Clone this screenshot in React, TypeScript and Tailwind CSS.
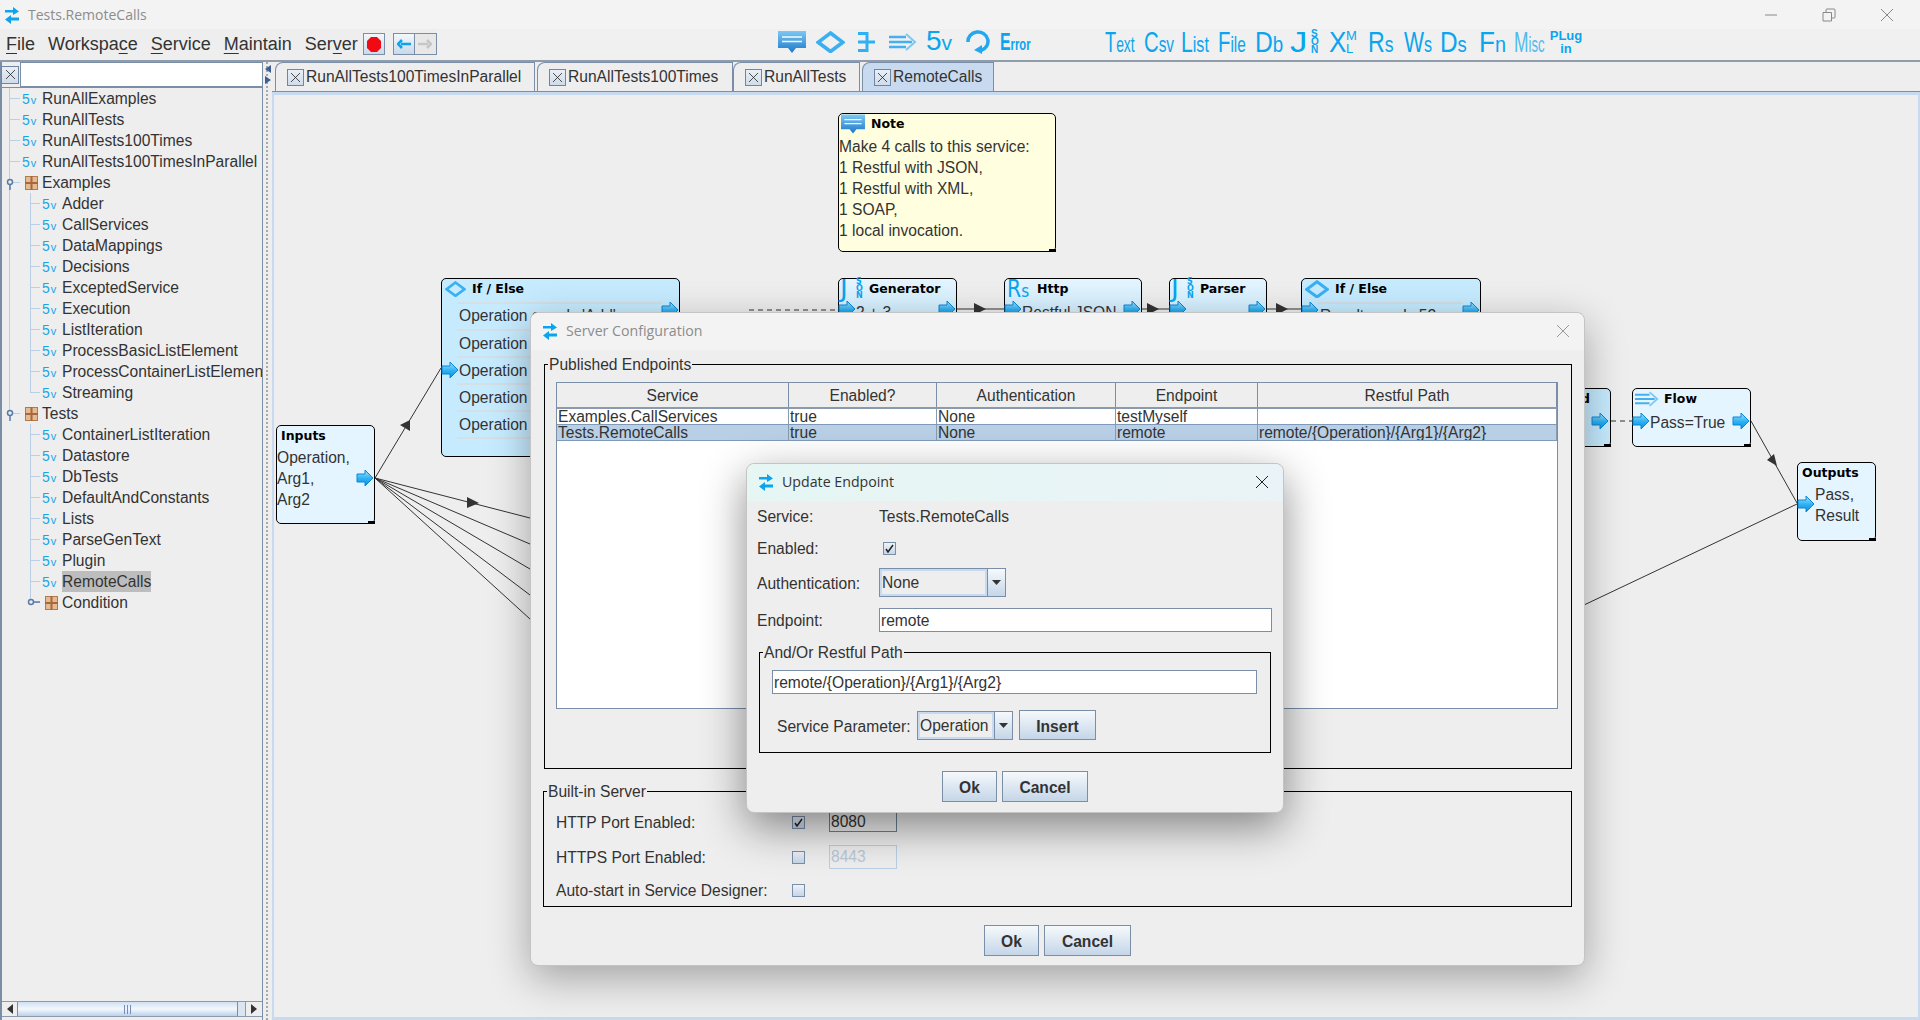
import * as React from "react"

const SwapIcon = () => (
  <svg width="14" height="18" viewBox="0 0 14 18" className="shrink-0">
    <path d="M0 4h8V1l6 4.500L8 9V6.500H0z" fill="#0aa5ee" />
    <path d="M14 11.500H6V9l-6 4.500 6 4.500v-3.500h8z" fill="#0aa5ee" />
  </svg>
)

const CloseX = ({ color = "#333" }: { color?: string }) => (
  <svg width="14" height="14" viewBox="0 0 14 14" className="shrink-0">
    <path d="M1 1l12 12M13 1L1 13" stroke={color} strokeWidth="1" fill="none" />
  </svg>
)

const Port = ({ className }: { className: string }) => (
  <svg width="18" height="18" viewBox="0 0 18 18" className={`absolute ${className}`}>
    <defs>
      <linearGradient id="portFill" x1="0" y1="0" x2="0" y2="1">
        <stop offset="0" stopColor="#a4e2fd" />
        <stop offset="0.55" stopColor="#2bb0f2" />
        <stop offset="1" stopColor="#0b8fe0" />
      </linearGradient>
    </defs>
    <polygon points="1,5 9,5 9,1 17,9 9,17 9,13 1,13" fill="url(#portFill)" stroke="#0a86d8" strokeWidth="1" />
  </svg>
)

const NoteIcon = ({ className = "" }: { className?: string }) => (
  <svg width="28" height="22" viewBox="0 0 28 22" className={className}>
    <defs>
      <linearGradient id="noteFill" x1="0" y1="0" x2="0" y2="1">
        <stop offset="0" stopColor="#7cc8f5" />
        <stop offset="1" stopColor="#1d78c8" />
      </linearGradient>
    </defs>
    <path d="M0 0h28v17h-10l-4 5-4-5H0z" fill="url(#noteFill)" />
    <path d="M4 6h20M4 10.500h20" stroke="#f2fbff" strokeWidth="1.500" />
  </svg>
)

const DiamondIcon = ({ size = 28 }: { size?: number }) => (
  <svg width={size} height={size * 0.78} viewBox="0 0 28 22">
    <polygon points="14,2 26,11 14,20 2,11" fill="none" stroke="#3ab0f2" strokeWidth="3.500" />
  </svg>
)

const JoinIcon = () => (
  <svg width="18" height="20" viewBox="0 0 18 20">
    <path d="M1 1.500h10M1 10h17M1 18.500h10M10 0v20" stroke="#2eb0f5" strokeWidth="3" fill="none" />
  </svg>
)

const FlowIcon = ({ className = "" }: { className?: string }) => (
  <svg width="28" height="20" viewBox="0 0 28 20" className={className}>
    <path d="M0 5h17M0 10h23M0 15h17" stroke="#46b0ee" strokeWidth="2.500" fill="none" />
    <path d="M17 2l9 8-9 8" stroke="#7cc8f5" strokeWidth="2" fill="none" />
  </svg>
)

const LoopIcon = () => (
  <svg width="30" height="24" viewBox="0 0 30 24">
    <path d="M5 12A10 9.500 0 1 1 18 20.500" stroke="#22a8ee" strokeWidth="3.500" fill="none" />
    <polygon points="19,15 19,24 11,20" fill="#22a8ee" />
  </svg>
)

const PackageIcon = () => (
  <svg width="13" height="14" viewBox="0 0 13 14" className="shrink-0">
    <rect x="0.500" y="0.500" width="12" height="13" fill="#e6bb90" stroke="#b27a50" />
    <path d="M0 7h13M6.500 0v14" stroke="#a8683e" strokeWidth="2" />
  </svg>
)

const ExpandHandle = ({ open, className }: { open: boolean; className: string }) => (
  <svg width="14" height="14" viewBox="0 0 14 14" className={`absolute ${className}`}>
    <circle cx="4" cy="5" r="2.500" fill="#eeeeee" stroke="#5b7ca8" strokeWidth="1.500" />
    {open ? (
      <path d="M4 8v5" stroke="#5b7ca8" strokeWidth="1.500" />
    ) : (
      <path d="M7 5h6" stroke="#5b7ca8" strokeWidth="1.500" />
    )}
  </svg>
)

const SvGlyph = () => (
  <span className="flex w-[20px] shrink-0 items-baseline text-[#18a5e8] leading-none">
    <span className="text-[14px]">5</span>
    <span className="ml-[1px] text-[11px]">v</span>
  </span>
)

const tree = [
  { name: "RunAllExamples", root: true },
  { name: "RunAllTests", root: true },
  { name: "RunAllTests100Times", root: true },
  { name: "RunAllTests100TimesInParallel", root: true },
  { name: "Examples", root: true, folder: true },
  { name: "Adder" },
  { name: "CallServices" },
  { name: "DataMappings" },
  { name: "Decisions" },
  { name: "ExceptedService" },
  { name: "Execution" },
  { name: "ListIteration" },
  { name: "ProcessBasicListElement" },
  { name: "ProcessContainerListElement" },
  { name: "Streaming", lastChild: true },
  { name: "Tests", root: true, folder: true, lastRoot: true },
  { name: "ContainerListIteration", noRootLine: true },
  { name: "Datastore", noRootLine: true },
  { name: "DbTests", noRootLine: true },
  { name: "DefaultAndConstants", noRootLine: true },
  { name: "Lists", noRootLine: true },
  { name: "ParseGenText", noRootLine: true },
  { name: "Plugin", noRootLine: true },
  { name: "RemoteCalls", noRootLine: true, selected: true },
  { name: "Condition", noRootLine: true, folder: true, lastChild: true },
]

type TreeItem = {
  name: string
  root?: boolean
  folder?: boolean
  lastChild?: boolean
  lastRoot?: boolean
  noRootLine?: boolean
  selected?: boolean
}

function TreeRow({ item }: { item: TreeItem }) {
  const { name, root, folder, lastChild, lastRoot, noRootLine, selected } = item
  return (
    <div className="relative flex h-[21px] items-center whitespace-nowrap">
      {!noRootLine && (
        <div className={`absolute left-[7px] top-0 w-px bg-[#b9cfe8] ${lastRoot ? "h-[10px]" : "h-full"}`} />
      )}
      {!root && (
        <>
          <div className={`absolute left-[28px] top-0 w-px bg-[#b9cfe8] ${lastChild ? "h-[11px]" : "h-full"}`} />
          <div className="absolute left-[28px] top-[10px] h-px w-[10px] bg-[#b9cfe8]" />
        </>
      )}
      {root && <div className="absolute left-[7px] top-[10px] h-px w-[11px] bg-[#b9cfe8]" />}
      {folder && root && <ExpandHandle open className="left-[4px] top-[5px]" />}
      {folder && !root && <ExpandHandle open={false} className="left-[25px] top-[5px]" />}
      <div className={root ? (folder ? "ml-[23px] flex items-center" : "ml-[20px] flex items-center") : folder ? "ml-[43px] flex items-center" : "ml-[40px] flex items-center"}>
        {folder ? (
          <span className="w-[17px] shrink-0"><PackageIcon /></span>
        ) : (
          <SvGlyph />
        )}
        <span className={`text-[15.6px] leading-[21px] ${selected ? "bg-[#bdbdbd]" : ""}`}>{name}</span>
      </div>
    </div>
  )
}

function Scrollbar() {
  return (
    <div className="flex h-[16px] shrink-0 border-y border-[#8a9bb0]">
      <div className="flex w-[15px] items-center justify-center bg-[#eeeeee]">
        <svg width="6" height="10" viewBox="0 0 6 10"><polygon points="6,0 6,10 0,5" fill="#333" /></svg>
      </div>
      <div className="flex w-[221px] items-center justify-center border-x border-[#6f8fc0] bg-gradient-to-b from-[#cfe0f2] via-[#f4f8fc] to-[#bcd0e8]">
        <div className="h-[9px] w-[1px] bg-[#6f8fc0]" />
        <div className="ml-[2px] h-[9px] w-[1px] bg-[#6f8fc0]" />
        <div className="ml-[2px] h-[9px] w-[1px] bg-[#6f8fc0]" />
      </div>
      <div className="w-[7px] bg-[#dbe5f0]" />
      <div className="flex w-[17px] items-center justify-center border-l border-[#8a9bb0] bg-[#eeeeee]">
        <svg width="6" height="10" viewBox="0 0 6 10"><polygon points="0,0 0,10 6,5" fill="#333" /></svg>
      </div>
    </div>
  )
}

function TabCloseBtn() {
  return (
    <span className="mr-[2px] flex h-[17px] w-[17px] shrink-0 items-center justify-center border border-[#6f86a0] bg-gradient-to-b from-[#e9eff6] to-[#cfdcea]">
      <svg width="9" height="9" viewBox="0 0 9 9"><path d="M0 0l9 9M9 0L0 9" stroke="#222" strokeWidth="0.800" /></svg>
    </span>
  )
}

function Tab({ label, className, active }: { label: string; className: string; active?: boolean }) {
  return (
    <div className={`flex h-[29px] items-center rounded-tl-[8px] border-l border-r border-t border-[#7a8ea8] pl-[11px] text-[15.6px] whitespace-nowrap ${active ? "bg-[#c8daf0]" : "bg-[#eeeeee]"} ${className}`}>
      <TabCloseBtn />
      {label}
    </div>
  )
}

const toolWords = [
  { big: "T", small: "ext", box: "ml-[74px] w-[30px]", fit: "scale-x-[.63]" },
  { big: "C", small: "sv", box: "ml-[9px] w-[30px]", fit: "scale-x-[.7]" },
  { big: "L", small: "ist", box: "ml-[7px] w-[28px]", fit: "scale-x-[.73]" },
  { big: "F", small: "ile", box: "ml-[9px] w-[28px]", fit: "scale-x-[.7]" },
  { big: "D", small: "b", box: "ml-[9px] w-[28px]", fit: "scale-x-[.85]" },
]

const toolWords2 = [
  { big: "R", small: "s", box: "ml-[9px] w-[26px]", fit: "scale-x-[.8]" },
  { big: "W", small: "s", box: "ml-[10px] w-[28px]", fit: "scale-x-[.73]" },
  { big: "D", small: "s", box: "ml-[8px] w-[27px]", fit: "scale-x-[.84]" },
  { big: "F", small: "n", box: "ml-[12px] w-[27px]", fit: "scale-x-[.9]" },
  { big: "M", small: "isc", box: "ml-[8px] w-[30px] opacity-70", fit: "scale-x-[.6]" },
]

const ToolWord = ({ big, small, box, fit }: { big: string; small: string; box: string; fit: string }) => (
  <div className={`h-[30px] shrink-0 leading-[30px] whitespace-nowrap text-[#0aa5ee] ${box}`}>
    <span className={`inline-block origin-left ${fit}`}>
      <span className="text-[29px]">{big}</span>
      <span className="text-[22px]">{small}</span>
    </span>
  </div>
)

const JsonGlyph = () => (
  <div className="flex h-[30px] w-[31px] shrink-0 text-[#0aa5ee]">
    <span className="inline-block w-[21px] origin-left scale-x-[1.2] text-[29px] leading-[30px]">J</span>
    <span className="mt-[3px] flex w-[10px] flex-col text-[10px] leading-[8px] font-bold">
      <span>S</span>
      <span>O</span>
      <span>N</span>
    </span>
  </div>
)

const SmallJsonGlyph = () => (
  <div className="mr-[5px] flex h-[22px] w-[24px] shrink-0 text-[#0aa5ee]">
    <span className="inline-block w-[16px] origin-left scale-x-[1.1] text-[24px] font-normal leading-[22px]">J</span>
    <span className="flex w-[8px] flex-col text-[8px] leading-[7px] font-bold">
      <span>S</span>
      <span>O</span>
      <span>N</span>
    </span>
  </div>
)

function Toolbar() {
  return (
    <div className="flex h-[31px] items-center bg-[#f0f0f0]">
      <div className="flex h-full w-[437px] shrink-0 items-center bg-[#eeeeee] pb-[1px] text-[18px]">
        <span className="ml-[6px]"><span className="underline underline-offset-[3px]">F</span>ile</span>
        <span className="ml-[13px]">Workspa<span className="underline underline-offset-[3px]">c</span>e</span>
        <span className="ml-[13px]"><span className="underline underline-offset-[3px]">S</span>ervice</span>
        <span className="ml-[13px]"><span className="underline underline-offset-[3px]">M</span>aintain</span>
        <span className="ml-[13px]">Ser<span className="underline underline-offset-[3px]">v</span>er</span>
        <span className="ml-[5px] flex h-[22px] w-[22px] items-center justify-center border border-[#7a8ea8] bg-gradient-to-b from-[#f4f7fb] to-[#c9d9ea]">
          <svg width="14" height="15" viewBox="0 0 14 15"><polygon points="4,0 10,0 14,4 14,11 10,15 4,15 0,11 0,4" fill="#f00a14" /></svg>
        </span>
        <span className="ml-[8px] flex h-[22px] w-[22px] items-center justify-center border border-[#7a8ea8] bg-gradient-to-b from-[#f4f7fb] to-[#c9d9ea]">
          <svg width="14" height="10" viewBox="0 0 14 10"><path d="M14 5H4M5 1L1 5l4 4" stroke="#0aa5ee" strokeWidth="2.500" fill="none" /></svg>
        </span>
        <span className="flex h-[22px] w-[22px] items-center justify-center border border-l-0 border-[#7a8ea8] bg-[#e8e8e8]">
          <svg width="14" height="10" viewBox="0 0 14 10"><path d="M0 5h10M9 1l4 4-4 4" stroke="#c6c6c6" strokeWidth="2.500" fill="none" /></svg>
        </span>
      </div>
      <div className="flex h-full items-center pb-[5px]">
        <NoteIcon className="ml-[341px] shrink-0" />
        <div className="ml-[10px] shrink-0"><DiamondIcon size={29} /></div>
        <div className="ml-[12px] shrink-0"><JoinIcon /></div>
        <FlowIcon className="ml-[14px] shrink-0" />
        <div className="ml-[9px] flex w-[28px] shrink-0 items-baseline leading-[30px] text-[#0aa5ee]">
          <span className="text-[28px]">5</span>
          <span className="text-[21px]">v</span>
        </div>
        <div className="ml-[9px] shrink-0"><LoopIcon /></div>
        <div className="ml-[7px] h-[30px] w-[31px] shrink-0 leading-[30px] font-bold whitespace-nowrap text-[#0aa5ee]">
          <span className="inline-block origin-left scale-x-[.66]">
            <span className="text-[24px]">E</span>
            <span className="text-[17px]">rror</span>
          </span>
        </div>
        {toolWords.map((w) => (
          <ToolWord key={w.big + w.small} {...w} />
        ))}
        <div className="ml-[7px]"><JsonGlyph /></div>
        <div className="ml-[8px] flex h-[30px] w-[30px] shrink-0 text-[#0aa5ee]">
          <span className="inline-block w-[17px] origin-left scale-x-[.9] text-[29px] leading-[30px]">X</span>
          <span className="mt-[2px] flex flex-col text-[13px] leading-[13px]">
            <span>M</span>
            <span>L</span>
          </span>
        </div>
        {toolWords2.map((w) => (
          <ToolWord key={w.big + w.small} {...w} />
        ))}
        <div className="ml-[7px] flex h-[26px] w-[30px] shrink-0 flex-col items-center text-[13px] leading-[13px] font-bold text-[#0aa5ee]">
          <span>PLug</span>
          <span>in</span>
        </div>
      </div>
    </div>
  )
}

function FlowNode({
  className,
  title,
  icon,
  titleClass = "",
  children,
}: {
  className: string
  title: string
  icon?: React.ReactNode
  titleClass?: string
  children?: React.ReactNode
}) {
  return (
    <div className={`absolute rounded-[5px] border-[1.5px] border-black ${className}`}>
      <div className={`flex h-[22px] items-center pb-[2px] font-['DejaVu_Sans',sans-serif] text-[12.5px] font-bold text-black ${titleClass}`}>
        {icon}
        {title}
      </div>
      {children}
      <div className="absolute -bottom-[1px] -right-[1px] h-[3px] w-[7px] bg-black" />
    </div>
  )
}

function Canvas() {
  return (
    <div className="relative flex-1 overflow-hidden border-x-2 border-b-[3px] border-[#c8daf0] bg-[#eeeeee]">
      <svg width="1646" height="925" className="absolute left-0 top-0">
        <g stroke="#333" strokeWidth="1" fill="none">
          <path d="M101 383L167 273" />
          <path d="M101 383L256 423M101 383L256 449M101 383L256 474M101 383L256 500M101 383L256 524" />
          <path d="M1310 510L1523 409M1477 326L1523 408" />
          <path d="M683 214H730M868 214H895M993 214H1027" />
          <path d="M475 215H564" strokeDasharray="5 4" />
          <path d="M1337 326H1358" strokeDasharray="5 4" />
        </g>
        <g fill="#333">
          <polygon points="136,325 126,330 136,336" />
          <polygon points="193,402 205,408 193,413" />
          <polygon points="1500,359 1493,365 1503,371" />
          <polygon points="700,208 712,214 700,220" />
          <polygon points="873,208 885,214 873,220" />
          <polygon points="1002,208 1014,214 1002,220" />
        </g>
      </svg>

      <FlowNode className="left-[564px] top-[18px] h-[139px] w-[218px] bg-[#ffffe0]" title="Note" titleClass="pl-[2px]" icon={<NoteIcon className="mr-[6px] h-[20px] w-[24px]" />}>
        <div className="pl-0 text-[15.6px] leading-[21px]">
          <div>Make 4 calls to this service:</div>
          <div>1 Restful with JSON,</div>
          <div>1 Restful with XML,</div>
          <div>1 SOAP,</div>
          <div>1 local invocation.</div>
        </div>
      </FlowNode>

      <FlowNode className="left-[167px] top-[183px] h-[179px] w-[239px] bg-[#c6ebff]" title="If / Else" titleClass="pl-[3px]" icon={<span className="mr-[6px] flex w-[21px]"><DiamondIcon size={21} /></span>}>
        <div className="ml-[15px] mt-[1px] w-[205px] border-t-2 border-[#d4dfe6] text-[15.6px]">
          <div className="h-[27px] border-b-2 border-[#d4dfe6] pl-[2px] leading-[24px] whitespace-nowrap">Operation equals 'Add'</div>
          <div className="h-[27px] border-b-2 border-[#d4dfe6] pl-[2px] leading-[25px]">Operation</div>
          <div className="h-[27px] border-b-2 border-[#d4dfe6] pl-[2px] leading-[25px]">Operation</div>
          <div className="h-[27px] border-b-2 border-[#d4dfe6] pl-[2px] leading-[25px]">Operation</div>
          <div className="h-[27px] border-b-2 border-[#d4dfe6] pl-[2px] leading-[25px]">Operation</div>
        </div>
        <Port className="-left-[1px] top-[82px]" />
        <Port className="right-0 top-[22px]" />
      </FlowNode>

      <FlowNode className="left-[564px] top-[183px] h-[60px] w-[119px] bg-gradient-to-b from-[#e4f5ff] to-[#c6ebff]" title="Generator" titleClass="pl-[1px]" icon={<SmallJsonGlyph />}>
        <Port className="-left-[1px] top-[21px]" />
        <Port className="right-0 top-[21px]" />
        <div className="ml-[17px] mt-[1px] text-[15.6px] leading-[21px]">2 + 3</div>
      </FlowNode>

      <FlowNode className="left-[730px] top-[183px] h-[60px] w-[138px] bg-gradient-to-b from-[#e4f5ff] to-[#c6ebff]" title="Http" titleClass="pl-[2px]" icon={<span className="mr-[6px] h-[22px] w-[24px]"><span className="inline-block origin-left scale-x-[.85] text-[24px] font-normal leading-[22px] text-[#0aa5ee]">R<span className="text-[18px]">s</span></span></span>}>
        <Port className="-left-[1px] top-[21px]" />
        <Port className="right-0 top-[21px]" />
        <div className="ml-[17px] mt-[1px] text-[15.6px] leading-[21px]">Restful JSON</div>
      </FlowNode>

      <FlowNode className="left-[895px] top-[183px] h-[60px] w-[98px] bg-gradient-to-b from-[#e4f5ff] to-[#c6ebff]" title="Parser" titleClass="pl-[1px]" icon={<SmallJsonGlyph />}>
        <Port className="-left-[1px] top-[21px]" />
        <Port className="right-0 top-[21px]" />
      </FlowNode>

      <FlowNode className="left-[1027px] top-[183px] h-[60px] w-[180px] bg-[#c6ebff]" title="If / Else" titleClass="pl-[3px]" icon={<span className="mr-[6px] flex w-[24px]"><DiamondIcon size={24} /></span>}>
        <div className="ml-[16px] mt-[1px] h-[27px] w-[145px] border-t-2 border-[#d4dfe6] pl-[2px] text-[15.6px] leading-[24px] whitespace-nowrap">Result equals 52</div>
        <Port className="-left-[1px] top-[22px]" />
        <Port className="right-0 top-[22px]" />
      </FlowNode>

      <FlowNode className="left-[1226px] top-[293px] h-[59px] w-[111px] bg-[#c6ebff]" title="End" titleClass="justify-end pr-[20px]">
        <Port className="right-[1px] top-[23px]" />
      </FlowNode>

      <FlowNode className="left-[1358px] top-[293px] h-[59px] w-[119px] bg-[#e4f5ff]" title="Flow" titleClass="pl-[2px]" icon={<FlowIcon className="mr-[5px] h-[20px] w-[24px]" />}>
        <Port className="-left-[1px] top-[23px]" />
        <Port className="right-0 top-[23px]" />
        <div className="ml-[17px] mt-[1px] text-[15.6px] leading-[21px]">Pass=True</div>
      </FlowNode>

      <FlowNode className="left-[1523px] top-[367px] h-[79px] w-[79px] bg-[#e4f5ff]" title="Outputs" titleClass="pl-[4px]">
        <Port className="-left-[1px] top-[32px]" />
        <div className="-mt-[1px] ml-[17px] text-[15.6px] leading-[21px]">
          <div>Pass,</div>
          <div>Result</div>
        </div>
      </FlowNode>

      <FlowNode className="left-[2px] top-[330px] h-[99px] w-[99px] bg-[#e4f5ff]" title="Inputs" titleClass="pl-[4px]">
        <Port className="right-0 top-[43px]" />
        <div className="-mt-[1px] text-[15.6px] leading-[21px]">
          <div>Operation,</div>
          <div>Arg1,</div>
          <div>Arg2</div>
        </div>
      </FlowNode>
    </div>
  )
}

const MetalButton = ({ label, className }: { label: string; className: string }) => (
  <div className={`flex items-center justify-center border border-[#7a8ea8] bg-gradient-to-b from-[#f6f9fc] to-[#c5d6e8] pt-[2px] text-[15.6px] font-bold ${className}`}>
    {label}
  </div>
)

const CheckBox = ({ checked, className = "" }: { checked?: boolean; className?: string }) => (
  <span className={`flex h-[13px] w-[13px] shrink-0 items-center justify-center border border-[#7a8ea8] bg-gradient-to-b from-[#eef3f8] to-[#c5d6e8] ${className}`}>
    {checked && (
      <svg width="9" height="9" viewBox="0 0 9 9"><path d="M1 5l2 3 5-7" stroke="#222" strokeWidth="1.500" fill="none" /></svg>
    )}
  </span>
)

const ComboBox = ({ value, className, textW }: { value: string; className: string; textW: string }) => (
  <div className={`flex h-[29px] shrink-0 border border-[#7a8ea8] bg-[#eeeeee] ${className}`}>
    <div className={`flex items-center border-2 border-[#c8daf0] pt-[1px] text-[15.6px] ${textW}`}>{value}</div>
    <div className="flex flex-1 items-center justify-center border-l border-[#7a8ea8] bg-gradient-to-b from-[#f6f9fc] to-[#c5d6e8]">
      <svg width="9" height="5" viewBox="0 0 9 5"><polygon points="0,0 9,0 4.500,5" fill="#333" /></svg>
    </div>
  </div>
)

const TextField = ({ value, className }: { value: string; className: string }) => (
  <div className={`flex h-[24px] items-center border border-[#7a8ea8] bg-white pl-[1px] pt-[1px] text-[15.6px] ${className}`}>{value}</div>
)

const GroupBox = ({ label, className, children }: { label: string; className: string; children: React.ReactNode }) => (
  <div className={`relative border border-black ${className}`}>
    <span className="absolute -top-[9px] left-[3px] bg-[#eeeeee] px-[1px] text-[15.6px] leading-[18px] whitespace-nowrap">{label}</span>
    {children}
  </div>
)

function EndpointTable() {
  const cell = "overflow-hidden whitespace-nowrap pl-[1px] border-r border-[#8a9bb0] leading-[15px]"
  const head = "flex h-[24px] items-center justify-center border-r border-[#7a8ea8] pt-[2px]"
  return (
    <div className="ml-[11px] mt-[17px] h-[327px] w-[1002px] border border-[#7a8ea8] bg-white text-[15.6px]">
      <div className="grid grid-cols-[232px_148px_179px_142px_299px] border-b-2 border-[#8a9bb0] bg-[#eeeeee]">
        <div className={head}>Service</div>
        <div className={head}>Enabled?</div>
        <div className={head}>Authentication</div>
        <div className={head}>Endpoint</div>
        <div className={head}>Restful Path</div>
      </div>
      <div className="grid h-[15px] grid-cols-[232px_148px_179px_142px_299px]">
        <div className={cell}>Examples.CallServices</div>
        <div className={cell}>true</div>
        <div className={cell}>None</div>
        <div className={cell}>testMyself</div>
        <div className={cell}></div>
      </div>
      <div className="grid h-[17px] grid-cols-[232px_148px_179px_142px_299px] border-y border-[#7f9ab8] bg-[#b8cfe5]">
        <div className={cell}>Tests.RemoteCalls</div>
        <div className={cell}>true</div>
        <div className={cell}>None</div>
        <div className={cell}>remote</div>
        <div className={cell}>remote/{"{Operation}"}/{"{Arg1}"}/{"{Arg2}"}</div>
      </div>
    </div>
  )
}

function ServerConfigDialog() {
  return (
    <div className="absolute left-[530px] top-[312px] flex h-[654px] w-[1055px] flex-col rounded-[8px] border border-[#c4c4c4] bg-[#eeeeee] shadow-[0_12px_40px_rgba(0,0,0,0.32)]">
      <div className="flex h-[37px] shrink-0 items-center rounded-t-[8px] bg-[#f3f3f3] pb-[2px] pl-[12px] pr-[14px] text-[#8c8c8c]">
        <SwapIcon />
        <span className="ml-[9px] font-['Open_Sans',sans-serif] text-[14.2px]">Server Configuration</span>
        <span className="ml-auto"><CloseX color="#999" /></span>
      </div>
      <GroupBox label="Published Endpoints" className="ml-[13px] mt-[14px] h-[405px] w-[1028px]">
        <EndpointTable />
      </GroupBox>
      <GroupBox label="Built-in Server" className="ml-[12px] mt-[22px] h-[116px] w-[1029px]">
        <div className="mt-[20px] flex h-[20px] items-center pl-[12px] text-[15.6px]">
          <span className="mt-[2px] w-[236px]">HTTP Port Enabled:</span>
          <CheckBox checked />
          <span className="ml-[24px] flex h-[20px] w-[68px] items-center border-x border-b border-[#6a7f96] pl-[1px]">8080</span>
        </div>
        <div className="mt-[13px] flex h-[24px] items-center pl-[12px] text-[15.6px]">
          <span className="mt-[2px] w-[236px]">HTTPS Port Enabled:</span>
          <CheckBox />
          <span className="ml-[24px] flex h-[24px] w-[68px] items-center border border-[#b8cfe5] pl-[1px] text-[#b8c8d8]">8443</span>
        </div>
        <div className="mt-[11px] flex h-[20px] items-center pl-[12px] text-[15.6px]">
          <span className="mt-[2px] w-[236px]">Auto-start in Service Designer:</span>
          <CheckBox />
        </div>
      </GroupBox>
      <div className="mt-[18px] flex justify-center gap-[5px]">
        <MetalButton label="Ok" className="h-[31px] w-[55px]" />
        <MetalButton label="Cancel" className="h-[31px] w-[87px]" />
      </div>
    </div>
  )
}

function UpdateEndpointDialog() {
  return (
    <div className="absolute left-[746px] top-[463px] flex h-[350px] w-[538px] flex-col rounded-[8px] border border-[#c4c4c4] bg-[#eeeeee] shadow-[0_14px_44px_rgba(0,0,0,0.45)]">
      <div className="flex h-[37px] shrink-0 items-center rounded-t-[8px] bg-gradient-to-r from-[#e5f6f3] to-[#eaf3f7] pb-[1px] pl-[12px] pr-[14px]">
        <SwapIcon />
        <span className="ml-[9px] font-['Open_Sans',sans-serif] text-[14.2px]">Update Endpoint</span>
        <span className="ml-auto"><CloseX color="#222" /></span>
      </div>
      <div className="mt-[4px] flex h-[24px] items-center pl-[10px] text-[15.6px]">
        <span className="w-[122px]">Service:</span>
        <span>Tests.RemoteCalls</span>
      </div>
      <div className="mt-[7px] flex h-[24px] items-center pl-[10px] text-[15.6px]">
        <span className="mt-[2px] w-[126px]">Enabled:</span>
        <CheckBox checked />
      </div>
      <div className="mt-[8px] flex items-center pl-[10px] text-[15.6px]">
        <span className="mt-[2px] w-[122px]">Authentication:</span>
        <ComboBox value="None" className="w-[127px]" textW="w-[107px]" />
      </div>
      <div className="mt-[10px] flex items-center pl-[10px] text-[15.6px]">
        <span className="mt-[2px] w-[122px]">Endpoint:</span>
        <TextField value="remote" className="w-[393px]" />
      </div>
      <GroupBox label="And/Or Restful Path" className="ml-[12px] mt-[20px] h-[101px] w-[512px]">
        <TextField value="remote/{Operation}/{Arg1}/{Arg2}" className="ml-[12px] mt-[17px] w-[485px]" />
        <div className="mt-[16px] flex items-center pl-[17px] text-[15.6px]">
          <span className="mt-[2px] w-[140px]">Service Parameter:</span>
          <ComboBox value="Operation" className="w-[96px]" textW="w-[76px]" />
          <MetalButton label="Insert" className="ml-[6px] h-[30px] w-[77px]" />
        </div>
      </GroupBox>
      <div className="mt-[18px] flex justify-center gap-[5px]">
        <MetalButton label="Ok" className="h-[31px] w-[55px]" />
        <MetalButton label="Cancel" className="h-[31px] w-[86px]" />
      </div>
    </div>
  )
}

export default function App() {
  return (
    <div className="relative flex h-[1020px] w-[1920px] flex-col overflow-hidden bg-[#eeeeee] font-['Liberation_Sans',sans-serif] text-[#333]">
      <div className="flex h-[29px] shrink-0 items-center bg-[#f3f3f3] pl-[5px]">
        <SwapIcon />
        <span className="ml-[9px] font-['Open_Sans',sans-serif] text-[14px] text-[#8c8c8c]">Tests.RemoteCalls</span>
        <div className="ml-auto flex items-center">
          <svg width="14" height="14" viewBox="0 0 14 14" className="mr-[44px]"><path d="M1 7h12" stroke="#888" strokeWidth="1" /></svg>
          <svg width="14" height="14" viewBox="0 0 14 14" className="mr-[44px]"><path d="M1 4.500h8.500v8.500H1zM4 4.500V2a1 1 0 0 1 1-1h7a1 1 0 0 1 1 1v7a1 1 0 0 1-1 1H9.500" stroke="#888" fill="none" /></svg>
          <svg width="14" height="14" viewBox="0 0 14 14" className="mr-[26px]"><path d="M1 1l12 12M13 1L1 13" stroke="#888" strokeWidth="1" /></svg>
        </div>
      </div>
      <Toolbar />
      <div className="h-[2px] shrink-0 bg-[#8f9cab]" />
      <div className="flex min-h-0 flex-1">
        <div className="flex w-[263px] shrink-0 flex-col border-l-2 border-r border-[#7a8ea8] pb-[3px]">
          <div className="flex h-[25px] shrink-0 items-center">
            <span className="-ml-[1px] flex h-[18px] w-[18px] shrink-0 items-center justify-center border border-[#6f86a0] bg-gradient-to-b from-[#e9eff6] to-[#cfdcea]">
              <svg width="9" height="9" viewBox="0 0 9 9"><path d="M0 0l9 9M9 0L0 9" stroke="#222" strokeWidth="0.800" /></svg>
            </span>
            <div className="ml-[1px] h-full flex-1 border-y border-l border-[#7a8ea8] bg-white" />
          </div>
          <div className="min-h-0 flex-1 overflow-hidden border-t border-[#7a8ea8]">
            {tree.map((item) => (
              <TreeRow key={item.name} item={item} />
            ))}
          </div>
          <Scrollbar />
        </div>
        <div className="relative w-[9px] shrink-0">
          <div className="absolute bottom-0 left-[3px] top-0 border-l-2 border-dotted border-[#a8a8a8]" />
          <svg width="6" height="8" viewBox="0 0 6 8" className="absolute left-[2px] top-[3px]"><polygon points="6,0 6,8 0,4" fill="#3d5f8f" /></svg>
          <svg width="6" height="8" viewBox="0 0 6 8" className="absolute left-[2px] top-[14px]"><polygon points="0,0 0,8 6,4" fill="#3d5f8f" /></svg>
        </div>
        <div className="flex min-w-0 flex-1 flex-col">
          <div className="flex h-[29px] shrink-0 items-end pl-[3px]">
            <Tab label="RunAllTests100TimesInParallel" className="w-[260px]" />
            <Tab label="RunAllTests100Times" className="ml-[2px] w-[196px]" />
            <Tab label="RunAllTests" className="w-[127px]" />
            <Tab label="RemoteCalls" className="ml-[2px] w-[132px]" active />
          </div>
          <div className="h-px shrink-0 bg-[#7a8ea8]" />
          <div className="h-[3px] shrink-0 bg-[#c8daf0]" />
          <Canvas />
        </div>
      </div>
      <ServerConfigDialog />
      <UpdateEndpointDialog />
    </div>
  )
}
